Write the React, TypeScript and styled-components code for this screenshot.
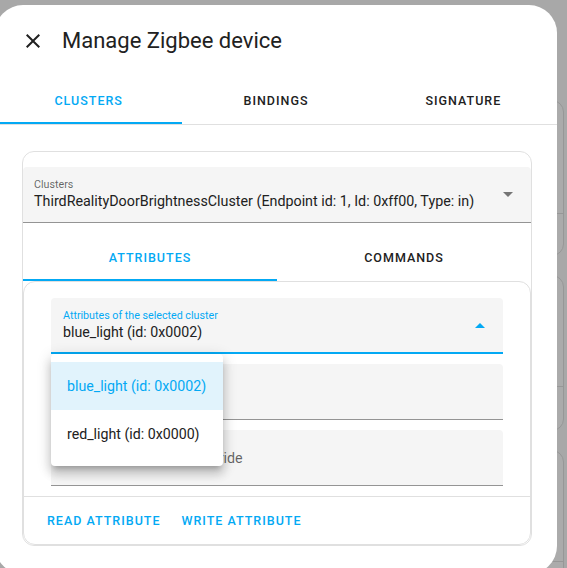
import React from "react";
import styled, { createGlobalStyle } from "styled-components";

const Global = createGlobalStyle`
  html, body { margin: 0; padding: 0; }
  body {
    font-family: Roboto, "Noto Sans", sans-serif;
    background: #a8a8a8;
    -webkit-font-smoothing: antialiased;
  }
  * { box-sizing: border-box; }
`;

const PRIMARY = "#03a9f4";

const Viewport = styled.div`
  position: relative;
  width: 567px;
  height: 568px;
  overflow: hidden;
  background: #a8a8a8;
`;

const BackPage = styled.div`
  display: flex;
  flex-direction: column;
  align-items: flex-end;
  gap: 19px;
  padding: 100px 3px 0 0;
`;

const BackCard = styled.div<{ $h: number }>`
  width: 320px;
  height: ${(p) => p.$h}px;
  background: #ababab;
  border: 1px solid #979797;
  border-radius: 12px;
  display: flex;
  flex-direction: column;
  justify-content: flex-end;
`;

const BackCardFooter = styled.div<{ $h: number }>`
  height: ${(p) => p.$h}px;
  border-top: 1px solid #979797;
`;

const Dialog = styled.div`
  position: absolute;
  left: -5px;
  top: 5px;
  width: 562px;
  height: 569px;
  background: #fff;
  border-radius: 28px;
  overflow: hidden;
  display: flex;
  flex-direction: column;
`;

const Header = styled.div`
  height: 71px;
  display: flex;
  align-items: center;
  gap: 17px;
  padding-left: 26px;
`;

const CloseButton = styled.button`
  width: 24px;
  height: 24px;
  padding: 0;
  border: none;
  background: none;
  color: #212121;
  display: flex;
  cursor: pointer;
`;

const Title = styled.h2`
  margin: 0;
  font-size: 22px;
  font-weight: 400;
  color: #212121;
`;

const TabBar = styled.div`
  display: flex;
  border-bottom: 1px solid #e0e0e0;
`;

const Tab = styled.div<{ $active?: boolean }>`
  flex: 1;
  height: 48px;
  display: flex;
  align-items: center;
  justify-content: center;
  padding-top: 2px;
  font-size: 12.5px;
  font-weight: 500;
  letter-spacing: 1px;
  text-transform: uppercase;
  color: ${(p) => (p.$active ? PRIMARY : "#212121")};
  border-bottom: 2px solid ${(p) => (p.$active ? PRIMARY : "transparent")};
`;

const Content = styled.div`
  padding: 26px 25px 0 27px;
`;

const OuterCard = styled.div`
  border: 1px solid #e0e0e0;
  border-radius: 12px;
  padding-top: 15px;
  display: flex;
  flex-direction: column;
`;

const SelectBox = styled.div<{ $focused?: boolean; $pad: number }>`
  position: relative;
  height: 56px;
  background: #f5f5f5;
  border-radius: 4px 4px 0 0;
  border-bottom: ${(p) => (p.$focused ? `2px solid ${PRIMARY}` : "1px solid #949494")};
  display: flex;
  align-items: flex-start;
  padding: 0 18px 0 ${(p) => p.$pad}px;
`;

const SelectText = styled.div`
  flex: 1;
  display: flex;
  flex-direction: column;
  padding-top: 12px;
  min-width: 0;
`;

const FloatLabel = styled.span<{ $focused?: boolean }>`
  font-size: 10.7px;
  line-height: 12px;
  color: ${(p) => (p.$focused ? PRIMARY : "rgba(0,0,0,0.6)")};
`;

const SelectValue = styled.span<{ $size?: number }>`
  font-size: ${(p) => p.$size ?? 14}px;
  line-height: 20px;
  color: #212121;
  white-space: nowrap;
`;

const Arrow = styled.span<{ $up?: boolean }>`
  align-self: center;
  width: 0;
  height: 0;
  border-left: 5px solid transparent;
  border-right: 5px solid transparent;
  ${(p) =>
    p.$up
      ? `border-bottom: 5px solid ${PRIMARY};`
      : `border-top: 5px solid #757575;`}
`;

const InnerTabs = styled.div`
  display: flex;
  margin-top: 10px;
`;

const InnerCard = styled.div`
  border: 1px solid #e0e0e0;
  border-radius: 12px;
  display: flex;
  flex-direction: column;
`;

const Fields = styled.div`
  display: flex;
  flex-direction: column;
  gap: 10px;
  padding: 16px 27px 10px 27px;
`;

const TextField = styled.div`
  height: 56px;
  background: #f5f5f5;
  border-radius: 4px 4px 0 0;
  border-bottom: 1px solid #949494;
  display: flex;
  align-items: center;
  padding: 0 16px;
`;

const FieldLabel = styled.span`
  font-size: 14.3px;
  color: rgba(0, 0, 0, 0.6);
`;

const Menu = styled.ul`
  position: absolute;
  top: calc(100% + 2px);
  left: 0;
  z-index: 5;
  width: 172px;
  margin: 0;
  padding: 8px 0;
  list-style: none;
  background: #fff;
  border-radius: 4px;
  box-shadow: 0 5px 5px -3px rgba(0, 0, 0, 0.2), 0 8px 10px 1px rgba(0, 0, 0, 0.14),
    0 3px 14px 2px rgba(0, 0, 0, 0.12);
`;

const MenuItem = styled.li<{ $selected?: boolean }>`
  height: 48px;
  display: flex;
  align-items: center;
  padding: 0 16px;
  font-size: 14.2px;
  color: ${(p) => (p.$selected ? PRIMARY : "#212121")};
  background: ${(p) => (p.$selected ? "#e1f3fc" : "transparent")};
  white-space: nowrap;
`;

const Actions = styled.div`
  height: 48px;
  border-top: 1px solid #e0e0e0;
  display: flex;
  align-items: center;
  gap: 5px;
  padding: 0 15px;
`;

const TextButton = styled.button`
  border: none;
  background: none;
  padding: 0 8px;
  height: 36px;
  font-family: inherit;
  font-size: 12.5px;
  font-weight: 500;
  letter-spacing: 1px;
  text-transform: uppercase;
  color: ${PRIMARY};
  cursor: pointer;
`;

const CloseIcon = () => (
  <svg width="24" height="24" viewBox="0 0 24 24" fill="currentColor">
    <path d="M19,6.41L17.59,5L12,10.59L6.41,5L5,6.41L10.59,12L5,17.59L6.41,19L12,13.41L17.59,19L19,17.59L13.41,12L19,6.41Z" />
  </svg>
);

export default function App() {
  return (
    <Viewport>
      <Global />
      <BackPage>
        <BackCard $h={156}>
          <BackCardFooter $h={42} />
        </BackCard>
        <BackCard $h={156}>
          <BackCardFooter $h={44} />
        </BackCard>
        <BackCard $h={156}>
          <BackCardFooter $h={44} />
        </BackCard>
      </BackPage>
      <Dialog>
        <Header>
          <CloseButton aria-label="Close">
            <CloseIcon />
          </CloseButton>
          <Title>Manage Zigbee device</Title>
        </Header>
        <TabBar>
          <Tab $active>Clusters</Tab>
          <Tab>Bindings</Tab>
          <Tab>Signature</Tab>
        </TabBar>
        <Content>
          <OuterCard>
            <SelectBox $pad={11}>
              <SelectText>
                <FloatLabel>Clusters</FloatLabel>
                <SelectValue $size={14.3}>
                  ThirdRealityDoorBrightnessCluster (Endpoint id: 1, Id: 0xff00, Type: in)
                </SelectValue>
              </SelectText>
              <Arrow />
            </SelectBox>
            <InnerTabs>
              <Tab $active>Attributes</Tab>
              <Tab>Commands</Tab>
            </InnerTabs>
            <InnerCard>
              <Fields>
                <SelectBox $focused $pad={12}>
                  <SelectText>
                    <FloatLabel $focused>Attributes of the selected cluster</FloatLabel>
                    <SelectValue $size={14.2}>blue_light (id: 0x0002)</SelectValue>
                  </SelectText>
                  <Arrow $up />
                  <Menu>
                    <MenuItem $selected>blue_light (id: 0x0002)</MenuItem>
                    <MenuItem>red_light (id: 0x0000)</MenuItem>
                  </Menu>
                </SelectBox>
                <TextField>
                  <FieldLabel>Value</FieldLabel>
                </TextField>
                <TextField>
                  <FieldLabel>Manufacturer code override</FieldLabel>
                </TextField>
              </Fields>
              <Actions>
                <TextButton>Read attribute</TextButton>
                <TextButton>Write attribute</TextButton>
              </Actions>
            </InnerCard>
          </OuterCard>
        </Content>
      </Dialog>
    </Viewport>
  );
}
